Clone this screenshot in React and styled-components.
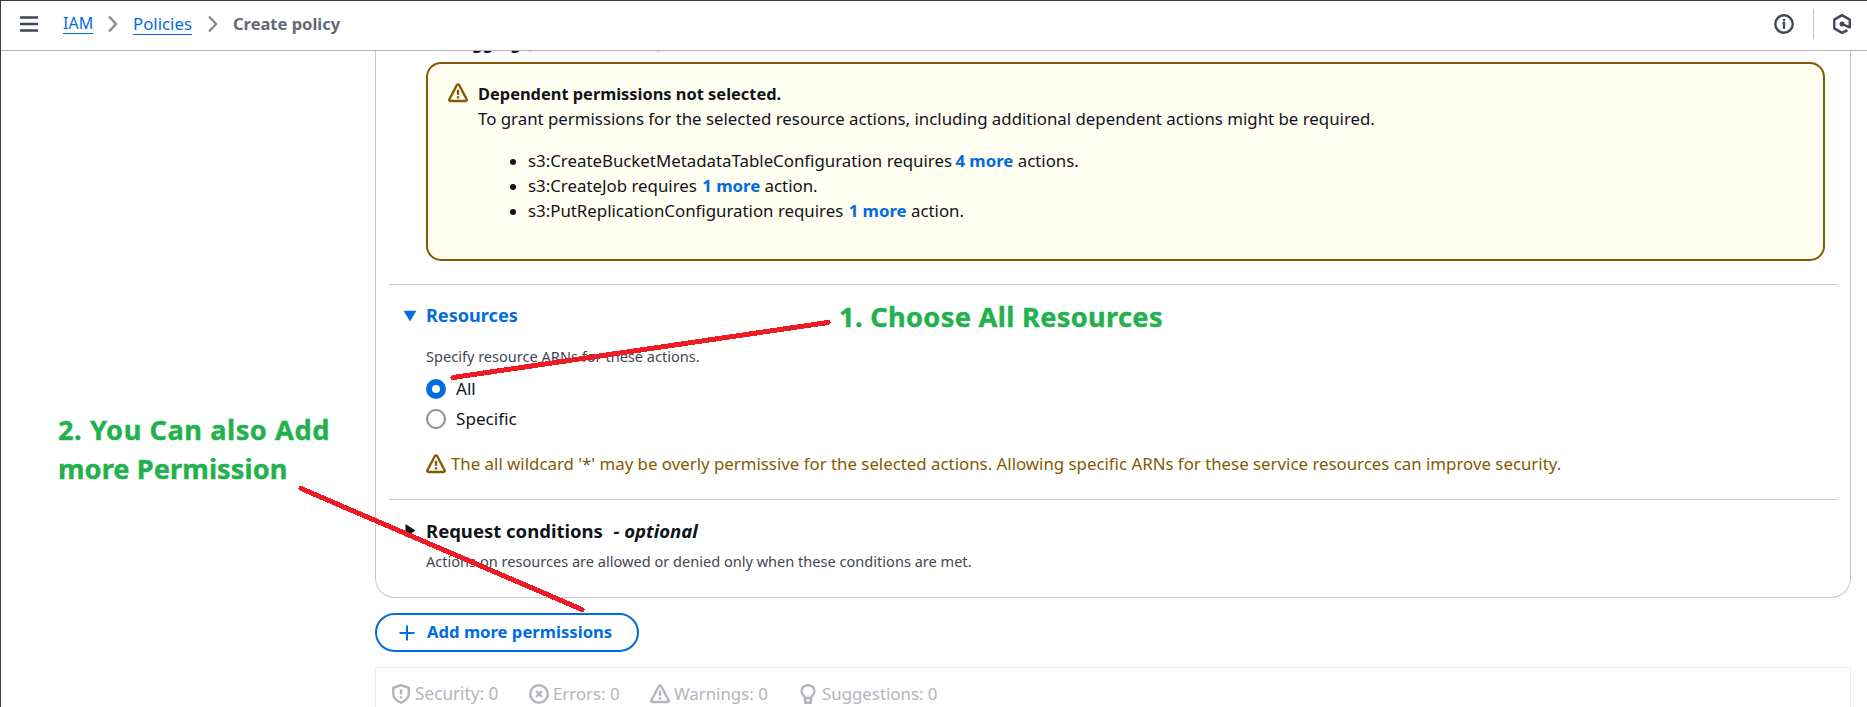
import React from "react";
import styled, { createGlobalStyle } from "styled-components";

const GlobalStyle = createGlobalStyle`
  *, *::before, *::after { box-sizing: border-box; }
  html, body { margin: 0; padding: 0; height: 707px; overflow: hidden; background: #fff; }
  body { font-family: "Noto Sans", "Open Sans", sans-serif; font-size: 16.84px; line-height: 25px; color: #0f141a; }
  svg { display: block; flex: none; }
`;

const Window = styled.div`
  position: relative;
  display: flex;
  flex-direction: column;
  width: 1867px;
  height: 707px;
  overflow: hidden;
  border: solid #3b3b40;
  border-width: 1px 0 0 1px;
`;

const EdgeMark = styled.span`
  position: absolute;
  left: -1px;
  top: 403px;
  width: 1px;
  height: 8px;
  background: #000;
`;

const TopBar = styled.header`
  display: flex;
  align-items: center;
  flex: none;
  height: 50px;
  padding: 0 0 3px 19px;
  border-bottom: 1px solid #b4b4bb;
  color: #424650;
`;

const Crumbs = styled.nav`
  display: flex;
  align-items: center;
  margin-left: 25px;
`;

const Crumb = styled.a`
  width: ${(p) => p.$width}px;
  margin-top: -2px;
  font-size: ${(p) => p.$size || 16.82}px;
  color: #006ce0;
  white-space: nowrap;
  text-decoration: underline 1px;
  text-underline-offset: 4px;
`;

const CurrentCrumb = styled.span`
  margin-top: -2px;
  font-size: 16.5px;
  font-weight: 700;
  color: #656871;
  white-space: nowrap;
`;

const CrumbArrow = styled.svg`
  margin: 0 15px;
  color: #8c8c94;
`;

const Tools = styled.div`
  display: flex;
  align-items: center;
  margin: 0 15px 0 auto;
`;

const ToolDivider = styled.span`
  width: 1px;
  height: 30px;
  margin: 0 18px 0 19px;
  background: #c6c6cd;
`;

const Main = styled.main`
  display: flex;
  flex-direction: column;
  align-items: flex-start;
  flex: 1;
  min-height: 0;
  overflow: hidden;
  padding-left: 374px;
`;

const Card = styled.section`
  flex: none;
  width: 1476px;
  height: 547px;
  padding: 0 12px 0 13px;
  border: 1px solid #c6c6cd;
  border-top: 0;
  border-radius: 0 0 20px 20px;
`;

const ActionGroup = styled.h3`
  height: 11px;
  margin: 0 0 0 64px;
  font-size: 16.5px;
  line-height: 25px;
  overflow: hidden;
  span { display: block; margin-top: -21px; letter-spacing: 0.45px; }
`;

const Alert = styled.div`
  display: flex;
  width: 1399px;
  height: 199px;
  margin-left: 37px;
  padding: 17px 20px;
  border: 2px solid #855900;
  border-radius: 15px;
  background: #fffef0;
`;

const AlertIcon = styled.span`
  width: 30px;
  padding-top: 2px;
  color: #855900;
`;

const AlertTitle = styled.div`
  height: 25px;
  font-size: 16.4px;
  font-weight: 700;
`;

const ActionList = styled.ul`
  display: flex;
  flex-direction: column;
  margin: 17px 0 0;
  padding: 0 0 0 31px;
  list-style: none;
`;

const ActionItem = styled.li`
  display: flex;
  align-items: center;
  white-space: pre;
  &::before {
    content: "";
    width: 6px;
    height: 6px;
    margin: 2px 12px 0 1px;
    border-radius: 50%;
    background: #0f141a;
  }
`;

const MoreLink = styled.b`
  margin-left: ${(p) => p.$nudge || 0}px;
  font-size: 16.8px;
  color: #006ce0;
`;

const Section = styled.section`
  border-top: 1px solid #c6c6cd;
  height: ${(p) => p.$height}px;
  margin-top: ${(p) => p.$gap || 0}px;
  padding: ${(p) => p.$top}px 0 0 37px;
`;

const SectionTitle = styled.h2`
  display: flex;
  align-items: center;
  height: 25px;
  margin: 0 0 0 -22px;
  white-space: pre;
  font-size: ${(p) => p.$size}px;
  color: ${(p) => p.$color};
  svg { margin-right: 9px; }
`;

const Optional = styled.em`
  margin-left: 1px;
  font-size: 18.5px;
`;

const Hint = styled.p`
  height: 20px;
  margin: ${(p) => p.$top}px 0 ${(p) => p.$bottom || 0}px;
  font-size: 14.57px;
  line-height: 20px;
  color: #424650;
`;

const RadioRow = styled.label`
  display: flex;
  align-items: center;
  gap: 10px;
  height: 25px;
  margin-bottom: 5px;
  font-size: 17.1px;
`;

const RadioDot = styled.span`
  width: 20px;
  height: 20px;
  border-radius: 50%;
  border: ${(p) => (p.$checked ? "6px solid #006ce0" : "2px solid #8c8c94")};
  background: #fff;
`;

const WarningNote = styled.div`
  display: flex;
  align-items: center;
  gap: 5px;
  margin-top: 20px;
  color: #855900;
`;

const AddButton = styled.button`
  display: flex;
  align-items: center;
  flex: none;
  gap: 12px;
  width: 264px;
  height: 39px;
  margin: 15px 0;
  padding: 0 0 3px 22px;
  border: 2px solid #006ce0;
  border-radius: 20px;
  background: #fff;
  font: 700 16.65px/25px "Noto Sans", sans-serif;
  color: #006ce0;
  svg { margin-top: 3px; }
`;

const Findings = styled.footer`
  display: grid;
  grid-template-columns: 138px 121px 148px auto;
  align-items: start;
  justify-content: start;
  flex: none;
  width: 1476px;
  height: 60px;
  padding: 13px 0 0 15px;
  border: 1px solid #ebebf0;
  color: #b4b4bb;
`;

const Finding = styled.div`
  display: flex;
  align-items: center;
  gap: ${(p) => p.$gap || 4}px;
  font-size: ${(p) => p.$size || 16.84}px;
  white-space: nowrap;
`;

const Note = styled.div`
  position: absolute;
  left: ${(p) => p.$x}px;
  top: ${(p) => p.$y}px;
  font-size: 27.2px;
  line-height: 39px;
  font-weight: 700;
  color: #22b14c;
  -webkit-text-stroke: 0.4px #22b14c;
  white-space: nowrap;
`;

const NoteLine = styled.span`
  display: block;
  letter-spacing: ${(p) => p.$spacing || 0}px;
`;

const Pointers = styled.svg`
  position: absolute;
  left: -1px;
  top: -1px;
`;

const Icon = ({ size = 20, children }) => (
  <svg width={size} height={size} viewBox="0 0 16 16" fill="none" stroke="currentColor" strokeWidth="1.9" strokeLinejoin="round">
    {children}
  </svg>
);

const WarningIcon = () => (
  <Icon>
    <path d="M7.1 1.65 1.1 13c-.35.7.1 1.4.85 1.4h12.1c.75 0 1.2-.7.85-1.4L8.9 1.65c-.4-.75-1.4-.75-1.8 0Z" />
    <path d="M8 5.4v4M8 10.5v1.9" />
  </Icon>
);

const Chevron = () => (
  <CrumbArrow width="10" height="18" viewBox="0 0 10 18" fill="none" stroke="currentColor" strokeWidth="2.5">
    <path d="m1 1.5 7 7.5-7 7.5" />
  </CrumbArrow>
);

export default function App() {
  return (
    <>
      <GlobalStyle />
      <Window>
        <EdgeMark />
        <TopBar>
          <svg width="18" height="16" viewBox="0 0 18 16" fill="none" stroke="currentColor" strokeWidth="2.4">
            <path d="M0 1.5h18M0 8h18M0 14.5h18" />
          </svg>
          <Crumbs>
            <Crumb $width={30} $size={16}>IAM</Crumb>
            <Chevron />
            <Crumb $width={60}>Policies</Crumb>
            <Chevron />
            <CurrentCrumb>Create policy</CurrentCrumb>
          </Crumbs>
          <Tools>
            <Icon>
              <circle cx="8" cy="8" r="7" />
              <path d="M8 4v1.8M6.8 7.3H8v4.5" strokeLinejoin="miter" />
            </Icon>
            <ToolDivider />
            <Icon>
              <path d="m12.4 12.9-4.4 2.2-6.2-3.6V4.5L8 .9l6.2 3.6v6.2L8 8" />
              <circle cx="8" cy="8" r="2" fill="currentColor" stroke="none" />
            </Icon>
          </Tools>
        </TopBar>
        <Main>
          <Card>
            <ActionGroup><span>Tagging (Selected 12/12)</span></ActionGroup>
            <Alert>
              <AlertIcon><WarningIcon /></AlertIcon>
              <div>
                <AlertTitle>Dependent permissions not selected.</AlertTitle>
                <div>To grant permissions for the selected resource actions, including additional dependent actions might be required.</div>
                <ActionList>
                  <ActionItem>s3:CreateBucketMetadataTableConfiguration requires <MoreLink $nudge={-1}>4 more</MoreLink> actions.</ActionItem>
                  <ActionItem>s3:CreateJob requires <MoreLink $nudge={1}>1 more</MoreLink> action.</ActionItem>
                  <ActionItem>s3:PutReplicationConfiguration requires <MoreLink $nudge={1}>1 more</MoreLink> action.</ActionItem>
                </ActionList>
              </div>
            </Alert>
            <Section $gap={23} $height={215} $top={18}>
              <SectionTitle $size={18.1} $color="#006ce0">
                <svg width="13" height="12" viewBox="0 0 13 12"><path d="M0 1h12l-6 10z" fill="currentColor" stroke="currentColor" strokeLinejoin="round" strokeWidth=".5" /></svg>
                Resources
              </SectionTitle>
              <Hint $top={18} $bottom={10}>Specify resource ARNs for these actions.</Hint>
              <RadioRow><RadioDot $checked />All</RadioRow>
              <RadioRow><RadioDot />Specific</RadioRow>
              <WarningNote>
                <WarningIcon />
                The all wildcard '*' may be overly permissive for the selected actions. Allowing specific ARNs for these service resources can improve security.
              </WarningNote>
            </Section>
            <Section $height={98} $top={18}>
              <SectionTitle $size={18.5} $color="#0f141a">
                <svg width="13" height="13" viewBox="0 0 13 13"><path d="M1.5 0v13l10-6.5z" fill="currentColor" /></svg>
                Request conditions  <Optional>- optional</Optional>
              </SectionTitle>
              <Hint $top={8}>Actions on resources are allowed or denied only when these conditions are met.</Hint>
            </Section>
          </Card>
          <AddButton>
            <svg width="16" height="16" viewBox="0 0 16 16" fill="none" stroke="currentColor" strokeWidth="2"><path d="M8 .5v15M.5 8h15" /></svg>
            Add more permissions
          </AddButton>
          <Findings>
            <Finding $size={17.2}>
              <Icon>
                <path d="M8 1 1.8 3v4.6c0 3.6 2.6 5.9 6.2 7.4 3.6-1.5 6.2-3.8 6.2-7.4V3z" />
                <path d="M8 4.2v4.2M8 9.8v1.7" />
              </Icon>
              Security: 0
            </Finding>
            <Finding>
              <Icon>
                <circle cx="8" cy="8" r="7" />
                <path d="m5.6 5.6 4.8 4.8M10.4 5.6l-4.8 4.8" />
              </Icon>
              Errors: 0
            </Finding>
            <Finding>
              <WarningIcon />
              Warnings: 0
            </Finding>
            <Finding>
              <Icon>
                <path d="M5.7 11.2C5.7 9.6 2.8 8.8 2.8 5.9a5.2 5 0 0 1 10.4 0c0 2.9-2.9 3.7-2.9 5.3z" />
                <path d="M5.7 11.2V15h4.6v-3.8" />
              </Icon>
              Suggestions: 0
            </Finding>
          </Findings>
        </Main>
        <Pointers width="1867" height="707" viewBox="0 0 1867 707" fill="none" stroke="#ed1c24" strokeWidth="5" strokeLinecap="round" shapeRendering="crispEdges">
          <path d="M453 377.5 828 322.5M301 488.5 582 609.5" />
        </Pointers>
        <Note $x={838} $y={296}>
          <NoteLine $spacing={0.33}>1. Choose All Resources</NoteLine>
        </Note>
        <Note $x={57} $y={409}>
          <NoteLine $spacing={0.55}>2. You Can also Add</NoteLine>
          <NoteLine $spacing={0.08}>more Permission</NoteLine>
        </Note>
      </Window>
    </>
  );
}
